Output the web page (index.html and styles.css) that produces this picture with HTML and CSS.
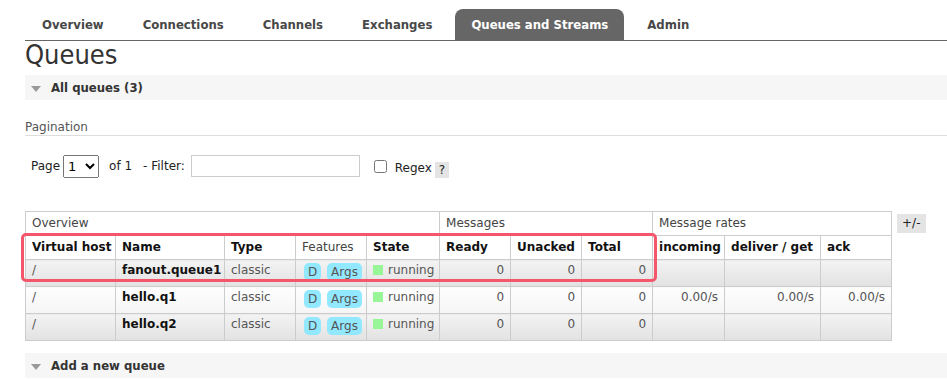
FILE: index.html
```html
<!DOCTYPE html>
<html lang="en">
<head>
    <meta charset="UTF-8">
    <meta name="viewport" content="width=device-width, initial-scale=1.0">
    <title>RabbitMQ Management - Queues</title>
    <link rel="stylesheet" href="styles.css">
</head>
<body>
    <div class="menu">
        <a href="#">Overview</a>
        <a href="#">Connections</a>
        <a href="#">Channels</a>
        <a href="#">Exchanges</a>
        <a href="#" class="selected">Queues and Streams</a>
        <a href="#">Admin</a>
    </div>
    <div class="main">
        <h1>Queues</h1>
        <div class="section"><span class="toggle"></span>All queues (3)</div>
        <div class="pagination">
            <h3>Pagination</h3>
            <div class="filter">
                <label for="page">Page</label>
                <select id="page"><option>1</option></select>
                <span class="of">of 1</span>
                <label for="filter" class="filter-label">- Filter:</label>
                <input type="text" id="filter">
                <input type="checkbox" id="regex">
                <label for="regex" class="regex">Regex</label>
                <span class="help">?</span>
            </div>
        </div>
        <div class="list-wrap">
            <table class="list">
                <colgroup>
                    <col style="width:90px"><col style="width:109px"><col style="width:71px"><col style="width:71px"><col style="width:73px">
                    <col style="width:71px"><col style="width:71px"><col style="width:71px">
                    <col style="width:72px"><col style="width:96px"><col style="width:71px">
                </colgroup>
                <thead>
                    <tr class="group">
                        <th colspan="5">Overview</th>
                        <th colspan="3">Messages</th>
                        <th colspan="3">Message rates</th>
                    </tr>
                    <tr>
                        <th>Virtual host</th>
                        <th>Name</th>
                        <th>Type</th>
                        <th class="plain">Features</th>
                        <th>State</th>
                        <th>Ready</th>
                        <th>Unacked</th>
                        <th>Total</th>
                        <th>incoming</th>
                        <th>deliver / get</th>
                        <th>ack</th>
                    </tr>
                </thead>
                <tbody>
                    <tr class="alt1">
                        <td>/</td>
                        <td class="name">fanout.queue1</td>
                        <td>classic</td>
                        <td class="features"><span class="badge">D</span> <span class="badge">Args</span></td>
                        <td><span class="state"></span>running</td>
                        <td class="r">0</td>
                        <td class="r">0</td>
                        <td class="r">0</td>
                        <td class="r"></td>
                        <td class="r"></td>
                        <td class="r"></td>
                    </tr>
                    <tr class="alt2">
                        <td>/</td>
                        <td class="name">hello.q1</td>
                        <td>classic</td>
                        <td class="features"><span class="badge">D</span> <span class="badge">Args</span></td>
                        <td><span class="state"></span>running</td>
                        <td class="r">0</td>
                        <td class="r">0</td>
                        <td class="r">0</td>
                        <td class="r">0.00/s</td>
                        <td class="r">0.00/s</td>
                        <td class="r">0.00/s</td>
                    </tr>
                    <tr class="alt1">
                        <td>/</td>
                        <td class="name">hello.q2</td>
                        <td>classic</td>
                        <td class="features"><span class="badge">D</span> <span class="badge">Args</span></td>
                        <td><span class="state"></span>running</td>
                        <td class="r">0</td>
                        <td class="r">0</td>
                        <td class="r">0</td>
                        <td class="r"></td>
                        <td class="r"></td>
                        <td class="r"></td>
                    </tr>
                </tbody>
            </table>
            <span class="columns">+/-</span>
            <div class="highlight"></div>
        </div>
        <div class="section add"><span class="toggle"></span>Add a new queue</div>
    </div>
</body>
</html>
```
FILE: styles.css
```css
* {
    box-sizing: border-box;
}
body {
    margin: 0;
    font-family: "DejaVu Sans", Verdana, sans-serif;
    font-size: 12px;
    color: #444;
    background: #fff;
}
.menu {
    display: flex;
    gap: 7px;
    margin-left: 25px;
    padding: 9px 0 0 1px;
    border-bottom: 1px solid #666;
}
.menu a {
    display: block;
    height: 31px;
    line-height: 31px;
    padding: 0 16px;
    font-family: "DejaVu Sans Condensed", "DejaVu Sans", sans-serif;
    font-weight: bold;
    font-size: 13px;
    color: #484848;
    text-decoration: none;
    border-radius: 8px 8px 0 0;
}
.menu a.selected {
    background: #666;
    color: #fff;
}
.main {
    padding-left: 25px;
}
h1 {
    margin: 1px 0 7px;
    font-family: "DejaVu Sans Condensed", "DejaVu Sans", sans-serif;
    font-weight: normal;
    font-size: 27px;
    line-height: 26px;
    color: #333;
}
.section {
    height: 25px;
    line-height: 25px;
    padding-left: 6px;
    background: #f6f6f6;
    font-family: "DejaVu Sans Condensed", "DejaVu Sans", sans-serif;
    font-weight: bold;
    font-size: 13px;
    color: #333;
}
.toggle {
    display: inline-block;
    width: 0;
    height: 0;
    border-left: 5px solid transparent;
    border-right: 5px solid transparent;
    border-top: 6px solid #999;
    margin-right: 10px;
    vertical-align: middle;
}
.pagination h3 {
    margin: 19px 0 0;
    padding-bottom: 0;
    font-size: 12px;
    font-weight: normal;
    line-height: 16px;
    color: #555;
    border-bottom: 1px solid #ddd;
}
.filter {
    display: flex;
    align-items: center;
    height: 24px;
    margin-top: 18px;
    padding-left: 6px;
    color: #222;
}
.filter select {
    width: 36px;
    height: 23px;
    margin-left: 3px;
    font-family: "DejaVu Sans", sans-serif;
    font-size: 13px;
}
.of {
    margin-left: 10px;
}
.filter-label {
    margin-left: 11px;
}
.filter input[type="text"] {
    width: 169px;
    height: 22px;
    margin-left: 6px;
    border: 1px solid #ccc;
}
.filter input[type="checkbox"] {
    width: 13px;
    height: 13px;
    margin: 0 0 0 14px;
}
.regex {
    margin: 4px 0 0 8px;
}
.help {
    width: 14px;
    height: 16px;
    margin: 8px 0 0 3px;
    line-height: 16px;
    text-align: center;
    background: #e4e4e4;
}
.list-wrap {
    position: relative;
    display: flex;
    align-items: flex-start;
    margin-top: 33px;
}
table.list {
    width: 867px;
    table-layout: fixed;
    border-collapse: collapse;
    border: 1px solid #ccc;
}
.list th,
.list td {
    border: 1px solid #ccc;
    padding: 4px 6px 5px;
    line-height: 14px;
    text-align: left;
    vertical-align: top;
    white-space: nowrap;
}
.list th {
    font-weight: bold;
    color: #111;
    background: #fff;
}
.list tr.group th,
.list th.plain {
    font-weight: normal;
    color: #444;
}
.list td {
    padding: 3px 6px 9px;
    color: #555;
}
.list td.features {
    padding-bottom: 5px;
}
.list td.name {
    font-weight: bold;
    color: #111;
}
.list td.r {
    text-align: right;
}
.alt1 td {
    background: linear-gradient(to bottom, #f3f3f3, #e2e2e2);
}
.alt2 td {
    background: linear-gradient(to bottom, #fefefe, #f5f5f5);
}
.badge {
    display: inline-block;
    height: 18px;
    line-height: 18px;
    padding: 0 4px;
    margin-left: 2px;
    vertical-align: top;
    border-radius: 5px;
    background: #92e8fe;
    color: #555;
}
.state {
    display: inline-block;
    width: 10px;
    height: 10px;
    margin-right: 5px;
    vertical-align: -1px;
    background: #98f598;
}
.columns {
    margin: 3px 0 0 5px;
    padding: 0 5px;
    height: 19px;
    line-height: 19px;
    background: #e4e4e4;
    color: #222;
}
.highlight {
    position: absolute;
    left: -4px;
    top: 22px;
    width: 636px;
    height: 49px;
    border: 3px solid #f4566b;
    border-radius: 5px;
}
.section.add {
    margin-top: 12px;
}
```
